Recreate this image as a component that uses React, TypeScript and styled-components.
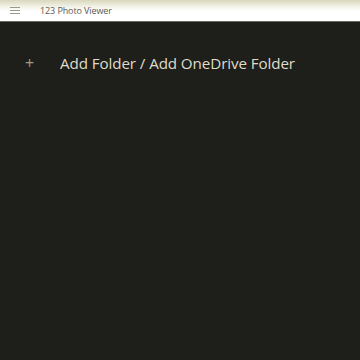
import React from 'react'
import styled, { createGlobalStyle } from 'styled-components'

const GlobalStyle = createGlobalStyle`
  html, body {
    margin: 0;
    padding: 0;
    background: #1e1e1a;
  }
  body {
    font-family: "Open Sans", "Noto Sans", sans-serif;
  }
`

const Page = styled.div`
  width: 360px;
  height: 360px;
  display: flex;
  flex-direction: column;
  background: #1e1e1a;
  overflow: hidden;
`

const TitleBar = styled.div`
  height: 21px;
  display: flex;
  align-items: center;
  background: linear-gradient(to bottom, #d9d7bd 0px, #f4f4ea 7px, #ffffff 11px, #ffffff 100%);
  border-bottom: 1px solid #6a6a66;
  box-sizing: content-box;
`

const MenuButton = styled.div`
  width: 30px;
  display: flex;
  justify-content: center;
`

const Title = styled.span`
  margin-left: 10px;
  font-size: 9px;
  color: #5a5a52;
  letter-spacing: -0.1px;
`

const Content = styled.div`
  flex: 1;
  padding: 29px 0 0 25px;
`

const AddRow = styled.div`
  display: flex;
  align-items: center;
  height: 24px;
`

const PlusIcon = styled.span`
  width: 35px;
  font-size: 16px;
  color: #a09e86;
  line-height: 1;
`

const AddLabel = styled.span`
  font-size: 15.2px;
  font-weight: 500;
  color: #dedcc9;
  letter-spacing: -0.1px;
`

export default function App() {
  return (
    <>
      <GlobalStyle />
      <Page>
        <TitleBar>
          <MenuButton>
            <svg width="10" height="7" viewBox="0 0 10 7">
              <path d="M0 0.5H10M0 3.5H10M0 6.5H10" stroke="#9a9a8c" strokeWidth="1" />
            </svg>
          </MenuButton>
          <Title>123 Photo Viewer</Title>
        </TitleBar>
        <Content>
          <AddRow>
            <PlusIcon>+</PlusIcon>
            <AddLabel>Add Folder / Add OneDrive Folder</AddLabel>
          </AddRow>
        </Content>
      </Page>
    </>
  )
}
